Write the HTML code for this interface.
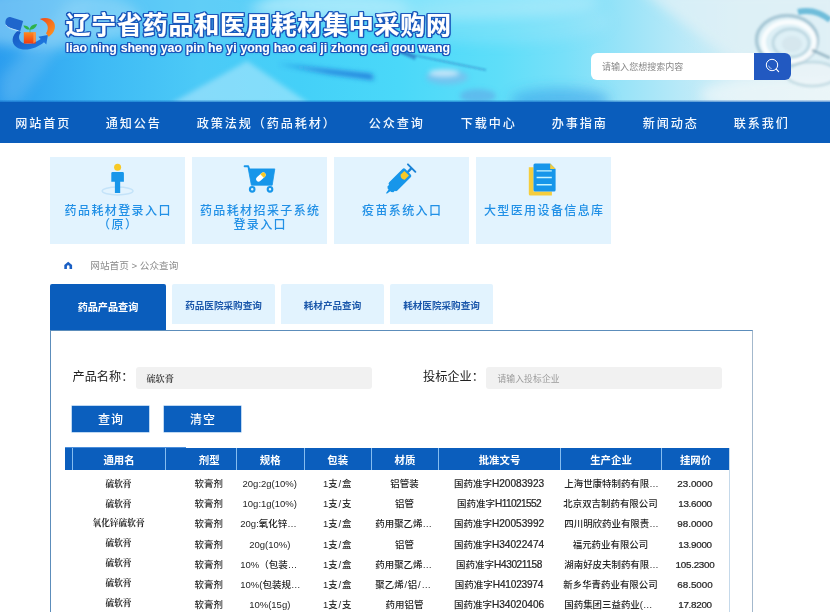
<!DOCTYPE html>
<html lang="zh-CN">
<head>
<meta charset="utf-8">
<title>辽宁省药品和医用耗材集中采购网</title>
<style>
*{box-sizing:border-box;margin:0;padding:0}
html,body{width:830px;height:612px;overflow:hidden;background:#fff}
body{font-family:"Liberation Sans","Noto Sans CJK SC",sans-serif;position:relative;color:#222}
.banner{position:absolute;left:0;top:0;width:830px;height:103px;overflow:hidden;
 background:linear-gradient(90deg,#2c9eef 0%,#3ebaf5 12%,#4ccaf7 24%,#44d0f8 36%,#4ad8f9 48%,#5edef9 60%,#78e0f9 68%,#98e3f8 75%,#b8e9f8 82%,#d4eef6 89%,#e2f1f6 100%)}
.banner svg.art{position:absolute;left:0;top:0}
.title{position:absolute;left:65.5px;top:4.8px;font-size:25px;letter-spacing:.75px;font-weight:bold;color:#fff;white-space:nowrap;
 -webkit-text-stroke:.18px #fff;text-shadow:1.45px 0.00px 0 #1b58bc,1.34px 0.55px 0 #1b58bc,1.03px 1.03px 0 #1b58bc,0.55px 1.34px 0 #1b58bc,0.00px 1.45px 0 #1b58bc,-0.55px 1.34px 0 #1b58bc,-1.03px 1.03px 0 #1b58bc,-1.34px 0.55px 0 #1b58bc,-1.45px 0.00px 0 #1b58bc,-1.34px -0.55px 0 #1b58bc,-1.03px -1.03px 0 #1b58bc,-0.55px -1.34px 0 #1b58bc,-0.00px -1.45px 0 #1b58bc,0.55px -1.34px 0 #1b58bc,1.03px -1.03px 0 #1b58bc,1.34px -0.55px 0 #1b58bc,0 1px 2.5px rgba(15,70,160,.55)}
.pinyin{position:absolute;left:65.8px;top:41.2px;font-size:12.3px;word-spacing:.45px;font-weight:bold;color:#fff;white-space:nowrap;
 -webkit-text-stroke:.1px #fff;text-shadow:1.30px 0.00px 0 #1b58bc,1.13px 0.65px 0 #1b58bc,0.65px 1.13px 0 #1b58bc,0.00px 1.30px 0 #1b58bc,-0.65px 1.13px 0 #1b58bc,-1.13px 0.65px 0 #1b58bc,-1.30px 0.00px 0 #1b58bc,-1.13px -0.65px 0 #1b58bc,-0.65px -1.13px 0 #1b58bc,-0.00px -1.30px 0 #1b58bc,0.65px -1.13px 0 #1b58bc,1.13px -0.65px 0 #1b58bc,0 .8px 2px rgba(15,70,160,.5)}
.search{position:absolute;left:591px;top:53px;width:200px;height:27px;border-radius:6px;background:#fff;overflow:hidden}
.search span{position:absolute;left:11px;top:9.2px;font-size:9.05px;color:#888;line-height:11px}
.search i{position:absolute;right:0;top:0;width:37.5px;height:27px;background:#2259c1}
.nav{position:absolute;left:0;top:102px;width:830px;height:41px;background:#0a5dbc}
.nav a{position:absolute;top:13.4px;font-size:12.1px;line-height:19px;color:#f4f9ff;white-space:nowrap;letter-spacing:1.9px;font-weight:500;margin-left:-.2px}
.card{position:absolute;top:157px;height:87px;background:#e2f3fe;text-align:center;color:#2190e6;font-size:12px;line-height:14.7px;letter-spacing:1.4px;font-weight:500}
.card p{position:absolute;left:1.4px;right:0;top:46.6px}
.card svg{position:absolute;left:0;top:0}
.crumb{position:absolute;left:90.3px;top:260.4px;font-size:9.65px;line-height:12px;color:#8a8a8a}
.tab{position:absolute;top:284px;height:39.8px;border-radius:2px 2px 0 0;background:#e2f3fe;color:#1c58ab;font-size:9.6px;font-weight:bold;text-align:center;line-height:43px;overflow:hidden}
.tab.on{background:#0a5dbc;color:#fff;height:46px;line-height:48.6px;font-size:10.15px}
.panel{position:absolute;left:50px;top:329.5px;width:703px;height:300px;border:1px solid #5c8dbb;border-right:1.5px solid #a3b8cc;background:#fff}
.lbl{position:absolute;top:368px;font-size:12.2px;line-height:18px;color:#222}
.inp{position:absolute;top:367px;height:22px;background:#f1f1f1;border-radius:3px;font-size:9.2px;color:#333;line-height:24px;padding-left:10.4px;font-weight:600;overflow:hidden;font-family:"Liberation Sans","Noto Serif CJK SC","Noto Sans CJK SC",sans-serif}
.inp.ph{color:#9a9a9a;font-weight:400;font-size:8.8px;line-height:25.2px;letter-spacing:.1px;padding-left:11.4px;font-family:"Liberation Sans","Noto Sans CJK SC",sans-serif}
.btn{position:absolute;top:406.3px;width:77px;height:25.7px;font-weight:500;background:#0b5fbe;color:#fff;font-size:12px;text-align:center;line-height:29.4px;letter-spacing:.9px;padding-left:.9px;overflow:hidden;box-shadow:0 0 0 .5px #7fb2e6}
.thead{position:absolute;left:65px;top:448px;width:664px;height:22.2px;background:#0b5ebd}
.thead:before{content:"";position:absolute;left:0;top:-1px;width:121px;height:1px;background:#4a8edb}
.thead b{position:absolute;top:0;height:22.2px;border-left:1px solid #86bdf0;color:#fff;font-size:10.4px;line-height:25.4px;text-align:center;overflow:hidden}
.rows{position:absolute;left:65px;top:474.1px;width:664px}
.r{position:relative;height:20.18px}
.r span{position:absolute;top:0;height:20.18px;line-height:20.18px;font-size:9.45px;color:#242424;font-weight:500;text-align:center;white-space:nowrap;overflow:hidden}
.r span.c1{font-size:8.7px;color:#222;font-family:"Liberation Sans","Noto Serif CJK SC","Noto Sans CJK SC",sans-serif;font-weight:700}
.r i{font-style:normal;font-size:10.1px;-webkit-text-stroke:.22px #242424}
.r span.c6{font-size:9.5px}
.r span.c8{font-size:9.85px;-webkit-text-stroke:.22px #242424}
.r s{text-decoration:none;padding:0 .8px}
.r span.t{text-align:left;padding-left:4.3px}
.r span.c3{font-size:9.5px}
.c1{left:7px;width:93px}.c2{left:100px;width:71px;padding-left:16.5px}.c3{left:171px;width:67.5px}.c4{left:238.5px;width:67.5px}
.c5{left:306px;width:67px}.c6{left:373px;width:122px}.c7{left:495px;width:101px}.c8{left:596px;width:68px}
</style>
</head>
<body>
<div id="wrap" style="position:absolute;left:0;top:0;width:830px;height:612px;will-change:transform;overflow:hidden">
<div class="banner">
  <svg class="art" width="830" height="103" viewBox="0 0 830 103">
<defs>
<filter id="bl3" x="-20%" y="-50%" width="140%" height="200%"><feGaussianBlur stdDeviation="2.5"/></filter>
<filter id="bl1" x="-20%" y="-20%" width="140%" height="140%"><feGaussianBlur stdDeviation="1"/></filter>
<filter id="bl6" x="-30%" y="-30%" width="160%" height="160%"><feGaussianBlur stdDeviation="6"/></filter>
<linearGradient id="lgA" x1="0" y1="0" x2="1" y2="1"><stop offset="0" stop-color="#1656bf"/><stop offset="1" stop-color="#1f7fe6"/></linearGradient>
<linearGradient id="lgO" x1="0" y1="0" x2="0" y2="1"><stop offset="0" stop-color="#ff8a1e"/><stop offset="1" stop-color="#ee3a12"/></linearGradient>
<linearGradient id="lgC" x1="0" y1="0" x2="1" y2="1"><stop offset="0" stop-color="#f0481a"/><stop offset="1" stop-color="#ff9a20"/></linearGradient>
<linearGradient id="bot" x1="0" y1="0" x2="0" y2="1"><stop offset="0" stop-color="#0b5fbe" stop-opacity="0"/><stop offset="1" stop-color="#0b5fbe" stop-opacity=".9"/></linearGradient>
</defs>
<g filter="url(#bl6)">
<polygon points="0,78 0,103 18,103 95,0 70,0" fill="#fff" opacity=".13"/>
<ellipse cx="45" cy="18" rx="95" ry="30" fill="#a8defa" opacity=".5"/>
<ellipse cx="170" cy="15" rx="110" ry="30" fill="#8fd6f9" opacity=".3"/>
<ellipse cx="330" cy="8" rx="80" ry="14" fill="#c8f0fc" opacity=".5"/>
<ellipse cx="500" cy="22" rx="110" ry="22" fill="#b6ecfb" opacity=".25"/>
<ellipse cx="560" cy="100" rx="50" ry="12" fill="#3d9ee8" opacity=".55"/>
<polygon points="640,-10 840,-10 840,70 735,60 705,40" fill="#dff0f6" opacity=".8"/>
<ellipse cx="430" cy="2" rx="170" ry="18" fill="#c6f0fc" opacity=".45"/>
<ellipse cx="780" cy="95" rx="80" ry="18" fill="#eef6f9" opacity=".7"/>
</g>
<g filter="url(#bl3)">
<polygon points="247,61 195,90 170,104 310,104" fill="#e8f8fe" opacity=".38"/>
<path d="M278 64 L372 74 L374 80 L330 74 Z" fill="#1a5fd0" opacity=".75"/>
<ellipse cx="447" cy="77" rx="21" ry="7.5" fill="#86b6ea" opacity=".6"/>
<ellipse cx="444" cy="73" rx="15" ry="3.5" fill="#dbeefb" opacity=".8"/>
<ellipse cx="478" cy="96" rx="18" ry="7" fill="#5fa6e6" opacity=".6"/>
</g>
<g filter="url(#bl1)">
<line x1="398" y1="52" x2="486" y2="70" stroke="#2458b0" stroke-width=".9" opacity=".8"/>
<path d="M400 49 l16 7 l-1 4 l-16 -7z" fill="#2a62bd" opacity=".6"/>
</g>
<g filter="url(#bl1)" fill="none">
<ellipse cx="787" cy="40" rx="30.5" ry="24.5" stroke="#7fa9bd" stroke-width="3.5" opacity=".55"/>
<ellipse cx="789" cy="42" rx="25.5" ry="20" stroke="#fff" stroke-width="5" opacity=".8"/>
<ellipse cx="791" cy="43" rx="18" ry="14" stroke="#a8c9d6" stroke-width="3" opacity=".55"/>
<ellipse cx="792" cy="44" rx="10" ry="8" fill="#d3e5ec" opacity=".8"/>
<ellipse cx="812" cy="74" rx="26" ry="12" stroke="#b4d0da" stroke-width="3" opacity=".6" fill="#eef5f8"/>
<path d="M798 12 Q815 8 830 20" stroke="#3fa6cf" stroke-width="6" opacity=".7"/>
<path d="M812 50 L830 58" stroke="#6f97aa" stroke-width="3" opacity=".6"/>
</g>
<rect x="0" y="99.5" width="830" height="3.5" fill="url(#bot)"/>
<g>
<path d="M18.3 30.5 C11.5 35 10.5 43.5 17 47.5 C25 52.3 37.5 47.8 44 42.2 L46.3 44.5 L47.9 34.9 L38.4 36.7 L40.7 38.9 C35 43.4 27 45.3 22.6 42.8 C18.2 40.3 18.2 36 20.8 32.3 Z" fill="url(#lgA)"/>
<path d="M11 17.2 L23.1 21 L20.3 30.9 L9 27.7 C3.1 25.8 4.8 15.3 11 17.2 Z" fill="#1f66cc"/>
<path d="M5.8 24.8 C7.5 27.8 12 29 18.6 30.9" fill="none" stroke="#bfe0fa" stroke-width="1"/>
<rect x="23.8" y="32.2" width="11.9" height="11.4" fill="url(#lgO)"/>
<path d="M33.4 32.2 h2.3 v9.4 l-2.3 2z" fill="#ffa04a" opacity=".75"/>
<path d="M29.7 32.4 L29.7 29.6 C26.5 29.8 24.3 28 23.4 25.4 C26.6 25.2 29 26.8 29.7 29.2 C30.2 26.4 33 24.2 37 24.1 C36.4 27.4 33.6 29.6 30.3 29.7 L30.3 32.4Z" fill="#2db24a"/>
<path d="M39.7 19 C45 17 51.4 17.8 54 22.5 C56.4 27.2 54.2 33.2 48.7 36.8 L46 33.2 C48.8 29.6 49.6 22.4 39.7 19 Z" fill="url(#lgC)"/>
</g>
</svg>
  <div class="title">辽宁省药品和医用耗材集中采购网</div>
  <div class="pinyin">liao ning sheng yao pin he yi yong hao cai ji zhong cai gou wang</div>
  <div class="search"><span>请输入您想搜索内容</span><i><svg width="38" height="27" viewBox="0 0 38 27"><circle cx="18" cy="12" r="5.7" fill="none" stroke="#fff" stroke-width="1"/><path d="M22.3 16.2 L24.6 18.6" stroke="#fff" stroke-width="1.2" stroke-linecap="round"/><path d="M14.6 12.6 A3.6 3.6 0 0 0 17.6 15.6" fill="none" stroke="#fff" stroke-width=".8" opacity=".8"/></svg></i></div>
</div>
<div class="nav">
  <a style="left:15.5px">网站首页</a>
  <a style="left:106px">通知公告</a>
  <a style="left:197px">政策法规（药品耗材）</a>
  <a style="left:369px">公众查询</a>
  <a style="left:461px">下载中心</a>
  <a style="left:552px">办事指南</a>
  <a style="left:643px">新闻动态</a>
  <a style="left:734px">联系我们</a>
</div>
<div class="card" style="left:50px;width:135px"><p>药品耗材登录入口<br>（原）</p></div>
<div class="card" style="left:192px;width:135px"><p>药品耗材招采子系统<br>登录入口</p></div>
<div class="card" style="left:334px;width:135px"><p>疫苗系统入口</p></div>
<div class="card" style="left:476px;width:135px"><p>大型医用设备信息库</p></div>
<svg style="position:absolute;left:0;top:150px" width="830" height="125" viewBox="0 150 830 125">
<!-- person -->
<ellipse cx="117.6" cy="191" rx="15.4" ry="3.9" fill="none" stroke="#c4e3f9" stroke-width="1.5"/>
<circle cx="117.6" cy="167.2" r="3.5" fill="#f7c927"/>
<path d="M112.6 172 h10 a1.3 1.3 0 0 1 1.3 1.3 v8.4 h-3.7 v11.2 h-5.3 v-11.2 h-3.6 v-8.4 a1.3 1.3 0 0 1 1.3 -1.3z" fill="#1796ea"/>
<!-- cart -->
<path d="M244.6 166.2 h3.6 l.9 2.9" fill="none" stroke="#1796ea" stroke-width="1.9" stroke-linecap="round" stroke-linejoin="round"/>
<path d="M248.3 168.9 h26.5 l-2.6 16.3 h-20.8z" fill="#1796ea" stroke="#1796ea" stroke-width=".8" stroke-linejoin="round"/>
<circle cx="252.2" cy="189.3" r="2.3" fill="none" stroke="#1796ea" stroke-width="2.1"/>
<circle cx="270" cy="189.3" r="2.3" fill="none" stroke="#1796ea" stroke-width="2.1"/>
<g transform="rotate(-42 260.9 177)"><rect x="255.2" y="174.5" width="11.4" height="5" rx="2.5" fill="#fff"/><path d="M262.4 174.5 h1.7 a2.5 2.5 0 0 1 0 5 h-1.7z" fill="#f7c927"/></g>
<!-- syringe -->
<g transform="translate(399.1 180.65) rotate(45)">
<rect x="-6.2" y="-18.7" width="12.4" height="1.9" rx=".9" fill="#1a82d6"/>
<rect x="-1.15" y="-18" width="2.3" height="7" fill="#1a82d6"/>
<rect x="-5.8" y="-12.6" width="11.6" height="22.8" rx="2" fill="#1796ea"/>
<path d="M-4.2 9.5 h8.4 v2.8 l-1.8 1.4 h-1.2 l-.7 4.2 h-1 l-.7 -4.2 h-1.2 l-1.8 -1.4z" fill="#1796ea"/>
<path d="M-3.2 -10.6 h6.6 v6 q-3.4 2.6 -6.6 -.6z" fill="#f7c927"/>
</g>
<!-- document -->
<path d="M528.8 167.2 h4.8 v24.2 h18.3 v4 h-21.6 a1.5 1.5 0 0 1 -1.5 -1.5z" fill="#f5cd3d"/>
<path d="M535 163.5 h15.2 l5.4 5.4 v21 a1.5 1.5 0 0 1 -1.5 1.5 h-19.1 a1.5 1.5 0 0 1 -1.5 -1.5 v-24.9 a1.5 1.5 0 0 1 1.5 -1.5z" fill="#1796ea"/>
<path d="M550.2 163.5 l5.4 5.4 h-5.4z" fill="#f5cd3d"/>
<g stroke="#c8f4ff" stroke-width="1.4"><path d="M536.6 170.9 h15.2 M536.6 177.5 h15.2 M536.6 184.8 h15.2"/></g>
<!-- home -->
<path d="M68.2 261.7 l3.9 3.2 v4 h-2.6 v-2.3 a1.3 1.3 0 0 0 -2.6 0 v2.3 h-2.6 v-4z" fill="#1a5fc4"/>
</svg>
<div class="crumb">网站首页 &gt; 公众查询</div>
<div class="panel"></div>
<div class="tab on" style="left:50px;width:116px">药品产品查询</div>
<div class="tab" style="left:172px;width:103px">药品医院采购查询</div>
<div class="tab" style="left:281px;width:103px">耗材产品查询</div>
<div class="tab" style="left:390px;width:103px">耗材医院采购查询</div>
<div class="lbl" style="left:72.5px">产品名称：</div>
<div class="inp" style="left:136px;width:236px">硫软膏</div>
<div class="lbl" style="left:423px">投标企业：</div>
<div class="inp ph" style="left:486px;width:236px">请输入投标企业</div>
<div class="btn" style="left:72px">查询</div>
<div class="btn" style="left:164px">清空</div>
<div class="thead">
  <b class="c1">通用名</b><b class="c2">剂型</b><b class="c3">规格</b><b class="c4">包装</b><b class="c5">材质</b><b class="c6">批准文号</b><b class="c7">生产企业</b><b class="c8">挂网价</b>
</div>
<div style="position:absolute;left:728.6px;top:448px;width:1px;height:170px;background:#c5d9ea"></div>
<div class="rows">
<div class="r"><span class="c1" style="top:-0.30px">硫软膏</span><span class="c2">软膏剂</span><span class="c3">20g:2g(10%)</span><span class="c4">1支<s>/</s>盒</span><span class="c5">铝管装</span><span class="c6">国药准字<i>H20083923</i></span><span class="t c7">上海世康特制药有限…</span><span class="c8">23.0000</span></div>
<div class="r"><span class="c1" style="top:-0.63px">硫软膏</span><span class="c2">软膏剂</span><span class="c3">10g:1g(10%)</span><span class="c4">1支<s>/</s>支</span><span class="c5">铝管</span><span class="c6">国药准字<i style="letter-spacing:-.6px">H11021552</i></span><span class="c7">北京双吉制药有限公司</span><span class="c8" style="letter-spacing:-.3px">13.6000</span></div>
<div class="r"><span class="c1" style="top:-0.96px">氧化锌硫软膏</span><span class="c2">软膏剂</span><span class="t c3">20g:氧化锌…</span><span class="c4">1支<s>/</s>盒</span><span class="t c5">药用聚乙烯…</span><span class="c6">国药准字<i>H20053992</i></span><span class="t c7">四川明欣药业有限责…</span><span class="c8">98.0000</span></div>
<div class="r"><span class="c1" style="top:-1.29px">硫软膏</span><span class="c2">软膏剂</span><span class="c3">20g(10%)</span><span class="c4">1支<s>/</s>盒</span><span class="c5">铝管</span><span class="c6">国药准字<i>H34022474</i></span><span class="c7">福元药业有限公司</span><span class="c8" style="letter-spacing:-.3px">13.9000</span></div>
<div class="r"><span class="c1" style="top:-1.62px">硫软膏</span><span class="c2">软膏剂</span><span class="t c3">10%（包装…</span><span class="c4">1支<s>/</s>盒</span><span class="t c5">药用聚乙烯…</span><span class="c6">国药准字<i style="letter-spacing:-.4px">H43021158</i></span><span class="t c7">湖南好皮夫制药有限…</span><span class="c8" style="letter-spacing:-.25px">105.2300</span></div>
<div class="r"><span class="c1" style="top:-1.95px">硫软膏</span><span class="c2">软膏剂</span><span class="t c3">10%(包装规…</span><span class="c4">1支<s>/</s>盒</span><span class="t c5">聚乙烯<s>/</s>铝<s>/</s>…</span><span class="c6">国药准字<i style="letter-spacing:-.2px">H41023974</i></span><span class="c7">新乡华青药业有限公司</span><span class="c8">68.5000</span></div>
<div class="r"><span class="c1" style="top:-2.28px">硫软膏</span><span class="c2">软膏剂</span><span class="c3">10%(15g)</span><span class="c4">1支<s>/</s>支</span><span class="c5">药用铝管</span><span class="c6">国药准字<i>H34020406</i></span><span class="t c7">国药集团三益药业(…</span><span class="c8" style="letter-spacing:-.3px">17.8200</span></div>
</div>
</div>
</body>
</html>
